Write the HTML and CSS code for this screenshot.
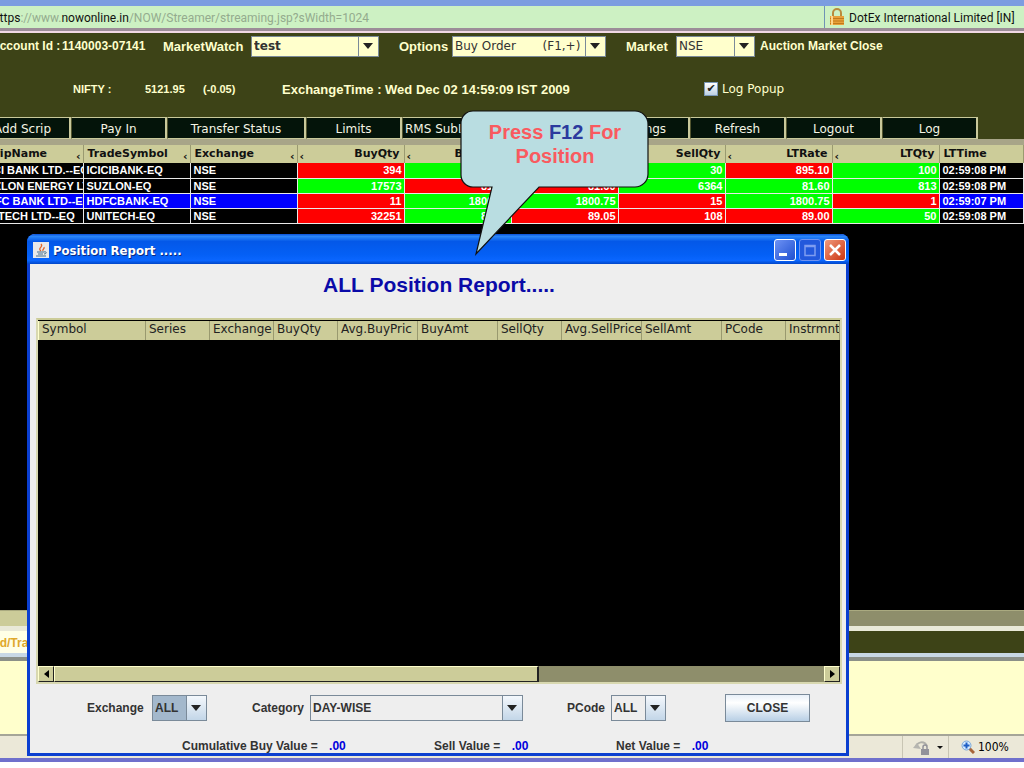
FILE: index.html
```
<!DOCTYPE html>
<html lang="en">
<head>
  <meta charset="UTF-8" />
  <meta name="viewport" content="width=device-width, initial-scale=1.0"/>
  <title>NOW Streamer</title>
  <link rel="stylesheet" href="styles.css">
</head>
<body>

  <!-- Browser chrome -->
  <header class="browser-top">
    <div class="address"><b>https</b>://www.<b>nowonline.in</b>/NOW/Streamer/streaming.jsp?sWidth=1024</div>
    <div class="cert">
      <svg class="lock" viewBox="0 0 16 18" aria-hidden="true">
        <path d="M4 9V5a4 4 0 0 1 8 0v4" fill="none" stroke="#b98a3c" stroke-width="2"/>
        <rect x="1" y="8" width="14" height="9" fill="#e8a03a"/>
        <path d="M1 10.500h14M1 13h14M1 15.500h14" stroke="#c07a1c"/>
        <path d="M3 8v9" stroke="#ffd48a" stroke-width="2"/>
      </svg>
      <span>DotEx International Limited [IN]</span>
    </div>
  </header>

  <!-- Toolbar -->
  <section class="toolbar">
    <div class="row controls">
      <span class="account">Account Id :</span>
      <span class="account-no">1140003-07141</span>
      <label for="watch">MarketWatch</label>
      <span class="combo"><select id="watch" class="strong"><option>test</option></select></span>
      <label for="options">Options</label>
      <span class="combo"><select id="options"><option>Buy Order &nbsp;&nbsp;&nbsp;&nbsp;&nbsp;&nbsp;(F1,+)</option></select></span>
      <label for="market">Market</label>
      <span class="combo"><select id="market"><option>NSE</option></select></span>
      <span class="status">Auction Market Close</span>
    </div>
    <div class="row info">
      <span class="small">NIFTY :</span>
      <span class="small">5121.95</span>
      <span class="small">(-0.05)</span>
      <span class="time">ExchangeTime : Wed Dec 02 14:59:09 IST 2009</span>
      <label class="popup"><input type="checkbox" checked>Log Popup</label>
    </div>
  </section>

  <nav class="menu">
    <button>Add Scrip</button>
    <button>Pay In</button>
    <button class="wide">Transfer Status</button>
    <button>Limits</button>
    <button>RMS SubLimits</button>
    <span class="blank"></span>
    <button>Settings</button>
    <button>Refresh</button>
    <button>Logout</button>
    <button>Log</button>
  </nav>

  <!-- Market watch -->
  <main class="market">
    <table class="watch">
      <colgroup>
        <col class="c"><col class="c"><col class="c"><col class="c"><col class="c">
        <col class="c"><col class="c"><col class="c"><col class="c"><col>
      </colgroup>
      <thead>
        <tr>
          <th class="mark-r">ScripName</th><th class="mark-r">TradeSymbol</th><th class="mark-r">Exchange</th>
          <th class="num mark-l">BuyQty</th><th class="num mark-l">BuyRate</th><th class="num mark-l">SellRate</th>
          <th class="num">SellQty</th><th class="num mark-l">LTRate</th><th class="num mark-l">LTQty</th><th>LTTime</th>
        </tr>
      </thead>
      <tbody>
        <tr>
          <td>ICICI BANK LTD.--EQ</td><td>ICICIBANK-EQ</td><td>NSE</td>
          <td class="down">394</td><td class="up">895.00</td><td class="up">895.10</td>
          <td class="up">30</td><td class="down">895.10</td><td class="up">100</td><td>02:59:08 PM</td>
        </tr>
        <tr>
          <td>SUZLON ENERGY LTD</td><td>SUZLON-EQ</td><td>NSE</td>
          <td class="up">17573</td><td class="down">81.55</td><td class="down">81.60</td>
          <td class="up">6364</td><td class="up">81.60</td><td class="up">813</td><td>02:59:08 PM</td>
        </tr>
        <tr class="selected">
          <td>HDFC BANK LTD--EQ</td><td>HDFCBANK-EQ</td><td>NSE</td>
          <td class="down">11</td><td class="up">1800.05</td><td class="up">1800.75</td>
          <td class="down">15</td><td class="up">1800.75</td><td class="down">1</td><td>02:59:07 PM</td>
        </tr>
        <tr>
          <td>UNITECH LTD--EQ</td><td>UNITECH-EQ</td><td>NSE</td>
          <td class="down">32251</td><td class="up">89.00</td><td class="down">89.05</td>
          <td class="down">108</td><td class="down">89.00</td><td class="up">50</td><td>02:59:08 PM</td>
        </tr>
      </tbody>
    </table>
  </main>

  <div class="page-scroll"></div>
  <div class="tabs"><span class="tab">rd/Trade</span></div>
  <div class="messages"></div>

  <footer class="statusbar">
    <div class="pane">
      <svg width="18" height="18" viewBox="0 0 18 18" aria-hidden="true">
        <path d="M3 9c1-5 8-7 11-1" fill="none" stroke="#b0b0aa" stroke-width="2"/>
        <path d="M0 10l4-5 4 6z" fill="#b5b5b0"/>
        <rect x="8" y="11" width="8" height="6" fill="#92929a"/>
        <path d="M10 11V9a2 2 0 0 1 4 0v2" fill="none" stroke="#92929a" stroke-width="1.500"/>
      </svg>
      <i class="caret"></i>
    </div>
    <div class="pane zoom">
      <svg width="14" height="14" viewBox="0 0 14 14" aria-hidden="true">
        <path d="M8 8l5 5" stroke="#a8653a" stroke-width="3"/>
        <circle cx="5.500" cy="5.500" r="4.500" fill="#d4ebff" stroke="#7aa8d8"/>
        <path d="M5.500 2.500v6M2.500 5.500h6" stroke="#1e5fc4" stroke-width="2"/>
      </svg>
      <span>100%</span>
    </div>
  </footer>

  <!-- Position report window -->
  <section class="window">
    <div class="titlebar">
      <svg class="java" viewBox="0 0 16 16" aria-hidden="true">
        <rect width="16" height="16" fill="#e9e9e9"/>
        <path d="M8 9C4 6 11 5 8 2M10 9c-1-2 2-2 1-4" fill="none" stroke="#e0662a" stroke-width="1.300"/>
        <path d="M4 10h7M5 12h5M3 14h10M11 10c3-1 3 2 0 2" fill="none" stroke="#47708f"/>
      </svg>
      <h2>Position Report .....</h2>
      <button class="win-btn" aria-label="Minimize">
        <svg viewBox="0 0 20 20"><path d="M4 14.500h8" stroke="#fff" stroke-width="3"/></svg>
      </button>
      <button class="win-btn dim" aria-label="Maximize">
        <svg viewBox="0 0 20 20"><path d="M5 5.500h10v10H5zM5 6.500h10" fill="none" stroke="#7f9cf0" stroke-width="1.500"/></svg>
      </button>
      <button class="win-btn close" aria-label="Close">
        <svg viewBox="0 0 20 20"><path d="M5 5l10 10M15 5L5 15" stroke="#fff" stroke-width="2.500"/></svg>
      </button>
    </div>

    <div class="window-body">
      <h1>ALL Position Report.....</h1>

      <div class="report">
        <div class="report-view">
          <table class="positions">
            <colgroup>
              <col class="w107"><col class="w64"><col class="w64"><col class="w64"><col class="w80"><col class="w80">
              <col class="w64"><col class="w80"><col class="w80"><col class="w64"><col>
            </colgroup>
            <thead>
              <tr>
                <th>Symbol</th><th>Series</th><th>Exchange</th><th>BuyQty</th><th>Avg.BuyPric</th><th>BuyAmt</th>
                <th>SellQty</th><th>Avg.SellPrice</th><th>SellAmt</th><th>PCode</th><th>Instrmnt</th>
              </tr>
            </thead>
          </table>
        </div>
        <div class="hscroll">
          <button class="arrow left" aria-label="Scroll left"></button>
          <div class="track"><div class="thumb"></div></div>
          <button class="arrow right" aria-label="Scroll right"></button>
        </div>
      </div>

      <form class="filters">
        <label for="exchange">Exchange</label>
        <span class="combo steel focus"><select id="exchange"><option>ALL</option></select></span>
        <label for="category">Category</label>
        <span class="combo steel"><select id="category"><option>DAY-WISE</option></select></span>
        <label for="pcode">PCode</label>
        <span class="combo steel"><select id="pcode"><option>ALL</option></select></span>
        <button type="button" class="close-btn">CLOSE</button>
      </form>

      <div class="totals">
        <p>Cumulative Buy Value = <b>.00</b></p>
        <p>Sell Value = <b>.00</b></p>
        <p>Net Value = <b>.00</b></p>
      </div>
    </div>
  </section>

  <!-- Callout -->
  <div class="callout">
    <svg viewBox="0 0 190 146" aria-hidden="true">
      <path d="M13 1H175a13 13 0 0 1 13 13V64a13 13 0 0 1-13 13H79L16 144 32 77H13A12 12 0 0 1 1 65V13A12 12 0 0 1 13 1z" fill="#b9dde1" stroke="#111" stroke-width="1.200"/>
    </svg>
    <p>Press <b>F12</b> For<br>Position</p>
  </div>

</body>
</html>
```
FILE: styles.css
```
* {
  box-sizing: border-box;
}

body {
  margin: 0;
  height: 100vh;
  overflow: hidden;
  position: relative;
  display: flex;
  flex-direction: column;
  background: #fff;
  font-family: "Liberation Sans", Arial, sans-serif;
  font-size: 12px;
}

button,
select,
input {
  margin: 0;
  padding: 0;
  font: inherit;
  color: inherit;
}

/* Browser chrome */
.browser-top {
  display: flex;
  height: 33px;
  border-top: 6px solid #7c9de0;
  border-bottom: 2px solid #f0d8e4;
  box-shadow: inset 0 -3px 0 #9c8d98;
  background: #cdf1c3;
  font-family: Roboto, "DejaVu Sans Condensed", sans-serif;
  line-height: 24px;
}

.address {
  flex: 1;
  margin-left: -7px;
  color: #94ab8e;
  white-space: nowrap;
}

.address b {
  font-weight: normal;
  color: #111;
}

.cert {
  display: flex;
  width: 200px;
  height: 22px;
  padding-left: 4px;
  gap: 4px;
  border-left: 1px solid #6f93b5;
  white-space: nowrap;
  color: #111;
}

.lock {
  width: 16px;
  height: 18px;
  margin-top: 2px;
}

/* Toolbar */
.toolbar {
  height: 84px;
  background: #3d4317;
  color: #ffffcc;
  font-weight: bold;
  white-space: nowrap;
}

.row {
  display: grid;
  align-items: center;
}

.controls {
  grid-template-columns: 71px 101px 88px 148px 53px 174px 50px 84px 1fr;
  height: 26px;
  margin-left: -9px;
  font-size: 13px;
}

.account,
.account-no,
.status {
  font-size: 12px;
}

.info {
  grid-template-columns: 72px 58px 79px 422px 1fr;
  height: 16px;
  margin-top: 22px;
  padding-left: 73px;
}

.small {
  font-size: 11px;
}

.time {
  font-size: 13px;
}

.popup {
  display: flex;
  align-items: center;
  gap: 4px;
  font: 12px "DejaVu Sans", Verdana, sans-serif;
}

.popup input {
  width: 14px;
  height: 14px;
  appearance: none;
  border: 1px solid #7b98b8;
  background: linear-gradient(#fff, #bcd0e4);
}

.popup input:checked::after {
  content: "✔";
  display: block;
  color: #222;
  font-size: 11px;
  line-height: 12px;
  text-align: center;
}

/* Combo boxes */
.combo {
  display: grid;
  grid-template-columns: 1fr 20px;
  align-items: center;
  height: 21px;
  border: 1px solid #7a8a99;
  background: linear-gradient(#7a8a99, #7a8a99) right 19px top / 1px 100% no-repeat #ffffcc;
  color: #333;
  font: 12px "DejaVu Sans", Verdana, sans-serif;
}

.controls .combo {
  margin-right: 20px;
}

.controls .combo:nth-of-type(5) {
  margin-right: 5px;
}

.combo select {
  width: 100%;
  height: 100%;
  padding-left: 2px;
  appearance: none;
  border: 0;
  background: none;
}

.combo .strong {
  font-weight: bold;
}

.combo::after {
  content: "";
  justify-self: center;
  border: 5px solid transparent;
  border-top: 6px solid #222;
  border-bottom: 0;
}

.steel {
  height: 26px;
  background: linear-gradient(#7a8a99, #7a8a99) right 19px top / 1px 100% no-repeat,
    linear-gradient(#f4f8fc, #c3d6e8) right / 19px 100% no-repeat #eee;
  font: bold 12px "Liberation Sans", Arial, sans-serif;
}

.focus select {
  background: #a3b8cc;
}

/* Menu */
.menu {
  display: flex;
  height: 28px;
  background: #3d4317;
  border-bottom: 6px solid #a8a588;
  font: 12px "DejaVu Sans", Verdana, sans-serif;
}

.menu button,
.blank {
  flex: 0 0 96px;
  border: 1px solid #c9c99b;
  border-left-color: #52552f;
  background: #04140a;
  color: #f4f4e4;
}

.menu button {
  padding-top: 1px;
  border-right-width: 2px;
}

.menu button:first-child {
  margin-left: -25px;
}

.menu .wide {
  flex-basis: 139px;
}

/* Market watch */
.market {
  flex: 1;
  min-height: 0;
  overflow: hidden;
  background: #000;
}

.watch {
  width: calc(100% + 24px);
  margin-left: -24px;
  border-collapse: collapse;
  table-layout: fixed;
  color: #fff;
  font-size: 11px;
  font-weight: bold;
  white-space: nowrap;
}

.watch .c {
  width: 107px;
}

.watch th {
  position: relative;
  height: 18px;
  padding: 0 4px 2px;
  overflow: hidden;
  border-right: 1px solid #9a9a70;
  background: #cccc99;
  color: #111;
  font: bold 11px "DejaVu Sans", Verdana, sans-serif;
  text-align: left;
}

.watch th.num {
  text-align: right;
}

.mark-r::after,
.mark-l::after {
  content: "‹";
  position: absolute;
  bottom: 0;
  right: 2px;
}

.mark-l::after {
  right: auto;
  left: 2px;
}

.watch td {
  height: 15px;
  padding: 0 3px;
  overflow: hidden;
  border-right: 1px solid #e8e8e8;
  border-bottom: 1px solid #e8e8e8;
  line-height: 14px;
}

.watch .up,
.watch .down {
  padding: 0 2px;
  text-align: right;
  background: #00ff00;
}

.watch .down {
  background: #ff0000;
}

.selected {
  background: #0000ff;
}

/* Lower panels */
.page-scroll {
  height: 21px;
  border-top: 1px solid #aaaa80;
  border-bottom: 5px solid #e9e9d8;
  background: linear-gradient(#cccc99, #cccc99) left / 500px 100% no-repeat #8e8e6b;
}

.tabs {
  height: 30px;
  border-bottom: 4px solid #8b9088;
  box-shadow: inset 0 -4px 0 #c8d8e4;
  background: #3d4317;
}

.tab {
  display: block;
  width: 200px;
  height: 22px;
  margin-left: -5px;
  background: #ffffe6;
  color: #e0a82c;
  font-size: 12px;
  font-weight: bold;
  line-height: 24px;
}

.messages {
  height: 73px;
  background: #ffffcc;
}

.statusbar {
  display: flex;
  justify-content: flex-end;
  height: 28px;
  margin-bottom: 6px;
  border-top: 2px solid #a5a598;
  border-bottom: 4px solid #6f70cc;
  background: #ebe8d8;
  font-family: "DejaVu Sans Condensed", "DejaVu Sans", sans-serif;
}

.pane {
  display: flex;
  align-items: center;
  width: 46px;
  gap: 6px;
  padding-left: 10px;
  border-left: 1px solid #c8c5b4;
}

.zoom {
  width: 76px;
  padding-left: 12px;
  gap: 3px;
}

.caret {
  border: 3px solid transparent;
  border-top-color: #111;
  border-bottom: 0;
}

/* Position report window */
.window {
  position: absolute;
  top: 234px;
  right: 175px;
  bottom: 12px;
  left: 27px;
  display: flex;
  flex-direction: column;
  border: 3px solid #0b3fd0;
  border-top: 0;
  border-radius: 8px 8px 0 0;
  background: #eee;
}

.titlebar {
  display: flex;
  align-items: center;
  gap: 4px;
  height: 30px;
  margin: 0 -3px;
  padding: 2px 4px 0 6px;
  border-radius: 8px 8px 0 0;
  background: linear-gradient(#0a4fd6, #2a86f8 8%, #0458e8 25%, #0460f6 70%, #0a66ff 88%, #0146c8);
}

.java {
  width: 16px;
  height: 16px;
}

.titlebar h2 {
  flex: 1;
  margin: 0;
  color: #fff;
  font: bold 13px "DejaVu Sans Condensed", "DejaVu Sans", sans-serif;
  text-shadow: 1px 1px #0a2a80;
}

.win-btn {
  width: 22px;
  height: 22px;
  margin-right: -1px;
  border: 1px solid #fff;
  border-radius: 3px;
  background: linear-gradient(135deg, #6d92f4, #1f4fd0);
}

.win-btn svg {
  display: block;
}

.dim {
  border-color: #6f93f0;
  background: #2358dc;
}

.close {
  background: linear-gradient(135deg, #f09a7c, #cc3410);
}

.window-body {
  flex: 1;
  display: flex;
  flex-direction: column;
  padding: 0 4px 0 6px;
  color: #333;
  font-weight: bold;
}

h1 {
  margin: 0 0 19px;
  padding-top: 7px;
  color: #0a0aa8;
  font-size: 21px;
  line-height: 28px;
  text-align: center;
}

.report {
  flex: 1;
  display: flex;
  flex-direction: column;
  min-height: 0;
  padding-top: 1px;
  border: 2px solid #d8d8b0;
  border-top-color: #cccc99;
  background: #000;
}

.report-view {
  flex: 1;
  overflow: hidden;
}

.positions {
  width: 100%;
  border-collapse: collapse;
  table-layout: fixed;
}

.w107 {
  width: 107px;
}

.w64 {
  width: 64px;
}

.w80 {
  width: 80px;
}

.positions th {
  height: 19px;
  padding: 0 0 3px 3px;
  overflow: hidden;
  border-left: 1px solid #ffffcc;
  border-right: 1px solid #99996f;
  background: #cccc99;
  color: #222;
  font: 12px "DejaVu Sans", Verdana, sans-serif;
  text-align: left;
  white-space: nowrap;
}

.hscroll {
  display: flex;
  height: 16px;
  background: #8e8e6b;
}

.arrow {
  display: grid;
  place-items: center;
  width: 16px;
  border: 1px solid #222;
  border-top-color: #ffffcc;
  border-left-color: #ffffcc;
  background: #cccc99;
}

.arrow::after {
  content: "";
  border: 4px solid transparent;
  border-left: 0;
  border-right: 5px solid #000;
}

.arrow.right::after {
  border-right: 0;
  border-left: 5px solid #000;
}

.track {
  flex: 1;
}

.thumb {
  width: 63%;
  height: 100%;
  border: 1px solid #ffffcc;
  border-right: 2px solid #222;
  border-bottom-color: #222;
  background: #cccc99;
}

.filters {
  display: grid;
  grid-template-columns: 65px 55px 103px 213px 88px 55px 1fr;
  align-items: center;
  height: 28px;
  margin: 10px 32px 0 51px;
}

.filters label:nth-of-type(n + 2) {
  padding-right: 6px;
  text-align: right;
}

.close-btn {
  justify-self: end;
  width: 85px;
  height: 28px;
  border: 1px solid #7a8a99;
  background: linear-gradient(#e8f0f8, #fff 30%, #b8cfe5);
}

.totals {
  display: grid;
  grid-template-columns: 252px 182px 1fr;
  margin: 17px 0 0 146px;
  line-height: 14px;
}

.totals p {
  margin: 0;
}

.totals b {
  margin-left: 8px;
  color: #0000dd;
}

/* Callout */
.callout {
  position: absolute;
  top: 110px;
  left: 460px;
  width: 190px;
}

.callout svg {
  display: block;
}

.callout p {
  position: absolute;
  top: 10px;
  left: 0;
  width: 100%;
  margin: 0;
  color: #f95a5f;
  font-size: 20px;
  font-weight: bold;
  line-height: 24px;
  text-align: center;
}

.callout b {
  color: #2b3a9e;
}
```
